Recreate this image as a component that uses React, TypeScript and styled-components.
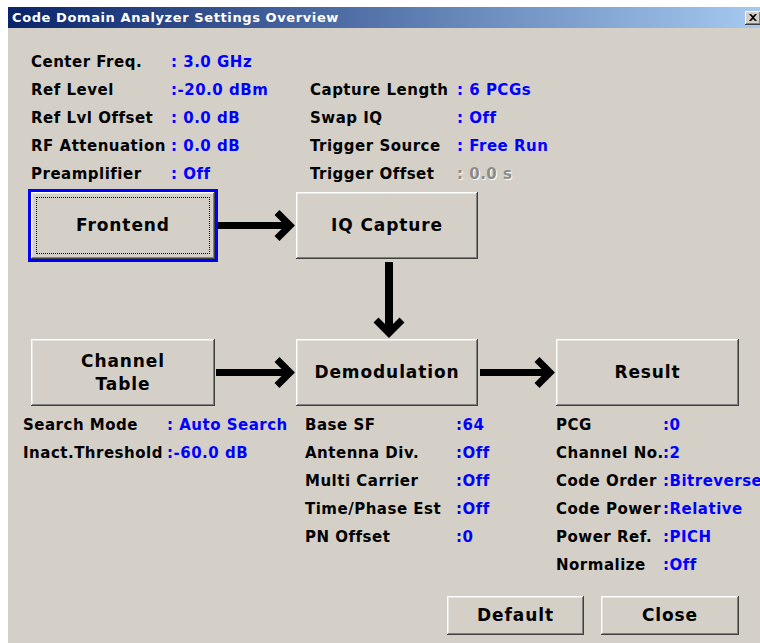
import React from "react";
import styled, { createGlobalStyle, css } from "styled-components";

const GlobalStyle = createGlobalStyle`
  html, body {
    margin: 0;
    padding: 0;
    background: #ffffff;
    overflow: hidden;
  }
  body {
    font-family: "DejaVu Sans", Verdana, sans-serif;
  }
`;

const Window = styled.div`
  margin: 7px 0 0 8px;
  width: 756px;
  height: 640px;
  background: #d4d0c8;
`;

const TitleBar = styled.div`
  height: 21px;
  display: flex;
  align-items: center;
  justify-content: space-between;
  padding: 0 3px 0 4px;
  background: linear-gradient(to right, #0a246a, #a6caf0);
  color: #ffffff;
  font-size: 13px;
  font-weight: bold;
  letter-spacing: 0.6px;
`;

const CloseBox = styled.div`
  width: 16px;
  height: 14px;
  display: flex;
  align-items: center;
  justify-content: center;
  background: #d4d0c8;
  box-shadow: inset -1px -1px #404040, inset 1px 1px #ffffff, inset -2px -2px #808080;
`;

const Content = styled.div`
  padding: 20px 0 0 15px;
`;

const Columns = styled.div<{ $indent?: number; $top?: number }>`
  display: flex;
  align-items: flex-start;
  margin-left: ${(p) => p.$indent ?? 0}px;
  margin-top: ${(p) => p.$top ?? 0}px;
`;

const InfoGrid = styled.div<{ $label: number; $width?: number; $skip?: number }>`
  display: grid;
  grid-template-columns: ${(p) => p.$label}px auto;
  grid-auto-rows: 28px;
  align-items: center;
  width: ${(p) => (p.$width ? `${p.$width}px` : "auto")};
  margin-top: ${(p) => (p.$skip ?? 0) * 28}px;
  font-size: 15px;
  font-weight: bold;
  letter-spacing: 0.5px;
  white-space: nowrap;
`;

const Label = styled.span`
  color: #000000;
`;

const Value = styled.span<{ $muted?: boolean }>`
  color: #0000ff;
  ${(p) =>
    p.$muted &&
    css`
      color: #8e8b86;
      text-shadow: 1px 1px #ffffff;
    `}
`;

const Diagram = styled.div`
  display: grid;
  grid-template-columns: 184px 81px 182px 78px 183px;
  grid-template-rows: 67px 80px 67px;
  margin: 4px 0 0 8px;
`;

const Cell = styled.div<{ $col: number; $row: number }>`
  grid-column: ${(p) => p.$col};
  grid-row: ${(p) => p.$row};
  display: flex;
`;

const BlockButton = styled.button<{ $focused?: boolean }>`
  position: relative;
  flex: 1;
  border: none;
  margin: 0;
  padding: 0 6px;
  background: #d4d0c8;
  color: #000000;
  font-family: "DejaVu Sans", Verdana, sans-serif;
  font-size: 17px;
  font-weight: bold;
  letter-spacing: 0.9px;
  line-height: 23px;
  white-space: nowrap;
  box-shadow: inset -1px -1px #404040, inset 1px 1px #ffffff, inset -2px -2px #808080,
    inset 2px 2px #e8e6e0;
  ${(p) =>
    p.$focused &&
    css`
      outline: 3px solid #0000ff;
      &::after {
        content: "";
        position: absolute;
        inset: 5px;
        border: 1px dotted #000000;
      }
    `}
`;

const Footer = styled.div`
  display: flex;
  justify-content: flex-end;
  gap: 17px;
  padding-right: 25px;
  margin-top: 17px;
`;

const FooterButton = styled(BlockButton)<{ $width: number }>`
  flex: none;
  width: ${(p) => p.$width}px;
  height: 39px;
`;

function HArrow({ width, start }: { width: number; start: number }) {
  const cy = 33.5;
  const tip = width - 1;
  return (
    <svg width={width} height={67}>
      <line x1={start} y1={cy} x2={tip - 6} y2={cy} stroke="#000" strokeWidth={7} />
      <polyline
        points={`${tip - 18},${cy - 13} ${tip - 5},${cy} ${tip - 18},${cy + 13}`}
        fill="none"
        stroke="#000"
        strokeWidth={7}
        strokeLinejoin="miter"
      />
    </svg>
  );
}

function VArrow() {
  const cx = 93;
  const tip = 79;
  return (
    <svg width={182} height={80}>
      <line x1={cx} y1={3} x2={cx} y2={tip - 6} stroke="#000" strokeWidth={8} />
      <polyline
        points={`${cx - 13},${tip - 18} ${cx},${tip - 5} ${cx + 13},${tip - 18}`}
        fill="none"
        stroke="#000"
        strokeWidth={7}
        strokeLinejoin="miter"
      />
    </svg>
  );
}

type Row = [string, string, boolean?];

const frontendRows: Row[] = [
  ["Center Freq.", ": 3.0 GHz"],
  ["Ref Level", ":-20.0 dBm"],
  ["Ref Lvl Offset", ": 0.0 dB"],
  ["RF Attenuation", ": 0.0 dB"],
  ["Preamplifier", ": Off"],
];

const captureRows: Row[] = [
  ["Capture Length", ": 6 PCGs"],
  ["Swap IQ", ": Off"],
  ["Trigger Source", ": Free Run"],
  ["Trigger Offset", ": 0.0 s", true],
];

const channelRows: Row[] = [
  ["Search Mode", ": Auto Search"],
  ["Inact.Threshold", ":-60.0 dB"],
];

const demodRows: Row[] = [
  ["Base SF", ":64"],
  ["Antenna Div.", ":Off"],
  ["Multi Carrier", ":Off"],
  ["Time/Phase Est", ":Off"],
  ["PN Offset", ":0"],
];

const resultRows: Row[] = [
  ["PCG", ":0"],
  ["Channel No.", ":2"],
  ["Code Order", ":Bitreverse"],
  ["Code Power", ":Relative"],
  ["Power Ref.", ":PICH"],
  ["Normalize", ":Off"],
];

function Settings({ rows }: { rows: Row[] }) {
  return (
    <>
      {rows.map(([label, value, muted]) => (
        <React.Fragment key={label}>
          <Label>{label}</Label>
          <Value $muted={muted}>{value}</Value>
        </React.Fragment>
      ))}
    </>
  );
}

export default function App() {
  return (
    <>
      <GlobalStyle />
      <Window>
        <TitleBar>
          <span>Code Domain Analyzer Settings Overview</span>
          <CloseBox>
            <svg width="8" height="7" viewBox="0 0 8 7">
              <path d="M0 0h2l2 2 2-2h2L5 3.5 8 7H6L4 5 2 7H0l3-3.5z" fill="#000" />
            </svg>
          </CloseBox>
        </TitleBar>
        <Content>
          <Columns $indent={8}>
            <InfoGrid $label={140} $width={279}>
              <Settings rows={frontendRows} />
            </InfoGrid>
            <InfoGrid $label={147} $skip={1}>
              <Settings rows={captureRows} />
            </InfoGrid>
          </Columns>

          <Diagram>
            <Cell $col={1} $row={1}>
              <BlockButton $focused>Frontend</BlockButton>
            </Cell>
            <Cell $col={2} $row={1}>
              <HArrow width={81} start={3} />
            </Cell>
            <Cell $col={3} $row={1}>
              <BlockButton>IQ Capture</BlockButton>
            </Cell>
            <Cell $col={3} $row={2}>
              <VArrow />
            </Cell>
            <Cell $col={1} $row={3}>
              <BlockButton>
                Channel
                <br />
                Table
              </BlockButton>
            </Cell>
            <Cell $col={2} $row={3}>
              <HArrow width={81} start={1} />
            </Cell>
            <Cell $col={3} $row={3}>
              <BlockButton>Demodulation</BlockButton>
            </Cell>
            <Cell $col={4} $row={3}>
              <HArrow width={78} start={2} />
            </Cell>
            <Cell $col={5} $row={3}>
              <BlockButton>Result</BlockButton>
            </Cell>
          </Diagram>

          <Columns $top={5}>
            <InfoGrid $label={144} $width={282}>
              <Settings rows={channelRows} />
            </InfoGrid>
            <InfoGrid $label={151} $width={251}>
              <Settings rows={demodRows} />
            </InfoGrid>
            <InfoGrid $label={107}>
              <Settings rows={resultRows} />
            </InfoGrid>
          </Columns>

          <Footer>
            <FooterButton $width={137}>Default</FooterButton>
            <FooterButton $width={138}>Close</FooterButton>
          </Footer>
        </Content>
      </Window>
    </>
  );
}
